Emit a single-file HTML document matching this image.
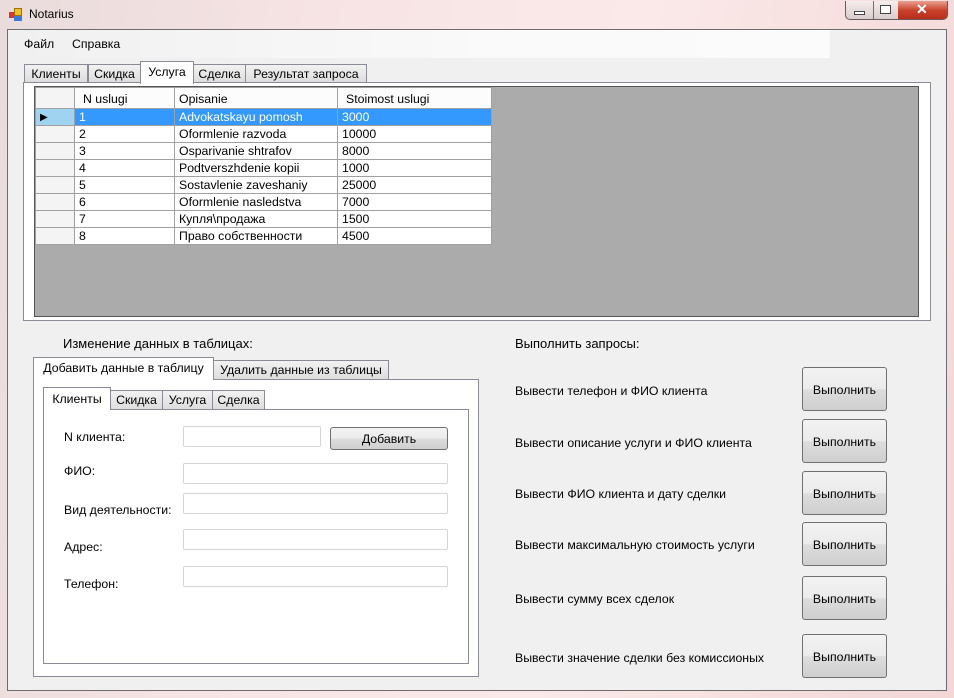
<!DOCTYPE html>
<html><head><meta charset="utf-8"><style>
*{margin:0;padding:0;box-sizing:border-box}
body{width:954px;height:698px;position:relative;overflow:hidden;font-family:"Liberation Sans",sans-serif;font-size:12.3px;color:#000;background:linear-gradient(100deg,#e9dcdc 0%,#f7e3e3 30%,#fbe9e9 60%,#f3d6d6 100%)}
.a{position:absolute}
.t{position:absolute;white-space:nowrap}
.tab{position:absolute;background:linear-gradient(#f2f2f2,#dcdcdc);border:1px solid #898c95;border-bottom:none;text-align:center;font-size:12.3px;line-height:18px}
.tab.sel{background:#fff;z-index:2}
.inp{position:absolute;background:#fff;border:1px solid #d5d5d5;border-radius:2px;height:21px}
.btn{position:absolute;border:1px solid #707070;border-radius:3px;background:linear-gradient(#f2f2f2 0%,#ebebeb 50%,#dddddd 51%,#cfcfcf 100%);text-align:center;font-size:12.3px}
table{border-collapse:collapse;position:absolute;left:35px;top:87px;font-size:12.3px}
td{border:1px solid #a0a0a0;height:17px;padding:1px 0 0 4px;line-height:15px;background:#fff}
tr.h td{height:21px;line-height:18px;padding-top:2px}
</style></head><body>
<div class="a" style="left:9px;top:8px;width:14px;height:13px">
<div class="a" style="left:0;top:4px;width:6px;height:6px;background:#d33"></div>
<div class="a" style="left:5px;top:0;width:8px;height:8px;background:#f0c020;border:1px solid #a07000"></div>
<div class="a" style="left:5px;top:8px;width:8px;height:5px;background:#3a7ad8"></div>
</div>
<div class="t" style="left:29px;top:7px;font-size:12px">Notarius</div>
<div class="a" style="left:845px;top:1px;width:103px;height:19px;border:1px solid #6b5a5a;border-top:none;border-radius:0 0 5px 5px;overflow:hidden;background:linear-gradient(#f6eded,#d9cccc)">
<div class="a" style="left:27px;top:0;width:1px;height:19px;background:#7a6a6a"></div>
<div class="a" style="left:52px;top:0;width:51px;height:19px;background:linear-gradient(#e8a090,#c9412b 50%,#b52d1a)"></div>
<div class="a" style="left:8px;top:10px;width:11px;height:4px;border:1px solid #444;background:#fff"></div>
<div class="a" style="left:34px;top:4px;width:11px;height:9px;border:1px solid #444;background:#fff"></div>
<div class="t" style="left:70px;top:0px;color:#fff;font-weight:bold;font-size:14px">✕</div>
</div>
<div class="a" style="left:7px;top:29px;width:940px;height:662px;background:#f0f0f0;border:1px solid #6d6d6d"></div>
<div class="a" style="left:8px;top:30px;width:822px;height:28px;background:linear-gradient(90deg,#f0f0f0,#fafafa 60%,#fbfbfb)"></div>
<div class="t" style="left:24px;top:37px">Файл</div>
<div class="t" style="left:72px;top:37px">Справка</div>
<div class="tab" style="left:24px;top:64px;width:64px;height:19px">Клиенты</div>
<div class="tab" style="left:88px;top:64px;width:53px;height:19px">Скидка</div>
<div class="tab sel" style="left:140px;top:61px;width:54px;height:23px;line-height:20px">Услуга</div>
<div class="tab" style="left:193px;top:64px;width:53px;height:19px">Сделка</div>
<div class="tab" style="left:245px;top:64px;width:122px;height:19px">Результат запроса</div>
<div class="a" style="left:23px;top:82px;width:908px;height:239px;background:#fff;border:1px solid #898c95"></div>
<div class="a" style="left:34px;top:86px;width:885px;height:231px;background:#ababab;border:1px solid #555"></div>
<table>
<tr class="h"><td style="width:39px;background:#f4f4f4"></td><td style="width:100px;background:#fcfcfc;padding-left:8px">N uslugi</td><td style="width:163px;background:#fcfcfc">Opisanie</td><td style="width:154px;background:#fcfcfc;padding-left:8px">Stoimost uslugi</td></tr>
<tr style="color:#fff"><td style="background:#9fd4f0;color:#000;font-size:10px">▶</td><td style="background:#3399ff">1</td><td style="background:#3399ff">Advokatskayu pomosh</td><td style="background:#3399ff">3000</td></tr>
<tr><td style="background:#f4f4f4"></td><td>2</td><td>Oformlenie razvoda</td><td>10000</td></tr>
<tr><td style="background:#f4f4f4"></td><td>3</td><td>Osparivanie shtrafov</td><td>8000</td></tr>
<tr><td style="background:#f4f4f4"></td><td>4</td><td>Podtverszhdenie kopii</td><td>1000</td></tr>
<tr><td style="background:#f4f4f4"></td><td>5</td><td>Sostavlenie zaveshaniy</td><td>25000</td></tr>
<tr><td style="background:#f4f4f4"></td><td>6</td><td>Oformlenie nasledstva</td><td>7000</td></tr>
<tr><td style="background:#f4f4f4"></td><td>7</td><td>Купля\продажа</td><td>1500</td></tr>
<tr><td style="background:#f4f4f4"></td><td>8</td><td>Право собственности</td><td>4500</td></tr>
</table>
<div class="t" style="left:63px;top:336px;font-size:13px">Изменение данных в таблицах:</div>
<div class="tab sel" style="left:33px;top:357px;width:181px;height:23px;line-height:21px">Добавить данные в таблицу</div>
<div class="tab" style="left:213px;top:360px;width:176px;height:20px">Удалить данные из таблицы</div>
<div class="a" style="left:33px;top:379px;width:446px;height:298px;background:#fff;border:1px solid #898c95"></div>
<div class="tab sel" style="left:43px;top:387px;width:68px;height:23px;line-height:22px">Клиенты</div>
<div class="tab" style="left:110px;top:390px;width:53px;height:20px">Скидка</div>
<div class="tab" style="left:162px;top:390px;width:51px;height:20px">Услуга</div>
<div class="tab" style="left:212px;top:390px;width:53px;height:20px">Сделка</div>
<div class="a" style="left:43px;top:409px;width:426px;height:255px;background:#fff;border:1px solid #898c95"></div>
<div class="t" style="left:64px;top:430px">N клиента:</div>
<div class="t" style="left:64px;top:464px">ФИО:</div>
<div class="t" style="left:64px;top:503px">Вид деятельности:</div>
<div class="t" style="left:64px;top:540px">Адрес:</div>
<div class="t" style="left:64px;top:577px">Телефон:</div>
<div class="inp" style="left:183px;top:426px;width:138px"></div>
<div class="btn" style="left:330px;top:427px;width:118px;height:23px;line-height:22px">Добавить</div>
<div class="inp" style="left:183px;top:463px;width:265px"></div>
<div class="inp" style="left:183px;top:493px;width:265px"></div>
<div class="inp" style="left:183px;top:529px;width:265px"></div>
<div class="inp" style="left:183px;top:566px;width:265px"></div>
<div class="t" style="left:515px;top:336px;font-size:13px">Выполнить запросы:</div>
<div class="t" style="left:515px;top:384px">Вывести телефон и ФИО клиента</div>
<div class="t" style="left:515px;top:436px">Вывести описание услуги и ФИО клиента</div>
<div class="t" style="left:515px;top:487px">Вывести ФИО клиента и дату сделки</div>
<div class="t" style="left:515px;top:538px">Вывести максимальную стоимость услуги</div>
<div class="t" style="left:515px;top:592px">Вывести сумму всех сделок</div>
<div class="t" style="left:515px;top:651px">Вывести значение сделки без комиссионых</div>
<div class="btn" style="left:802px;top:367px;width:85px;height:44px;line-height:44px">Выполнить</div>
<div class="btn" style="left:802px;top:419px;width:85px;height:44px;line-height:44px">Выполнить</div>
<div class="btn" style="left:802px;top:471px;width:85px;height:44px;line-height:44px">Выполнить</div>
<div class="btn" style="left:802px;top:522px;width:85px;height:44px;line-height:44px">Выполнить</div>
<div class="btn" style="left:802px;top:576px;width:85px;height:44px;line-height:44px">Выполнить</div>
<div class="btn" style="left:802px;top:634px;width:85px;height:44px;line-height:44px">Выполнить</div>
</body></html>
